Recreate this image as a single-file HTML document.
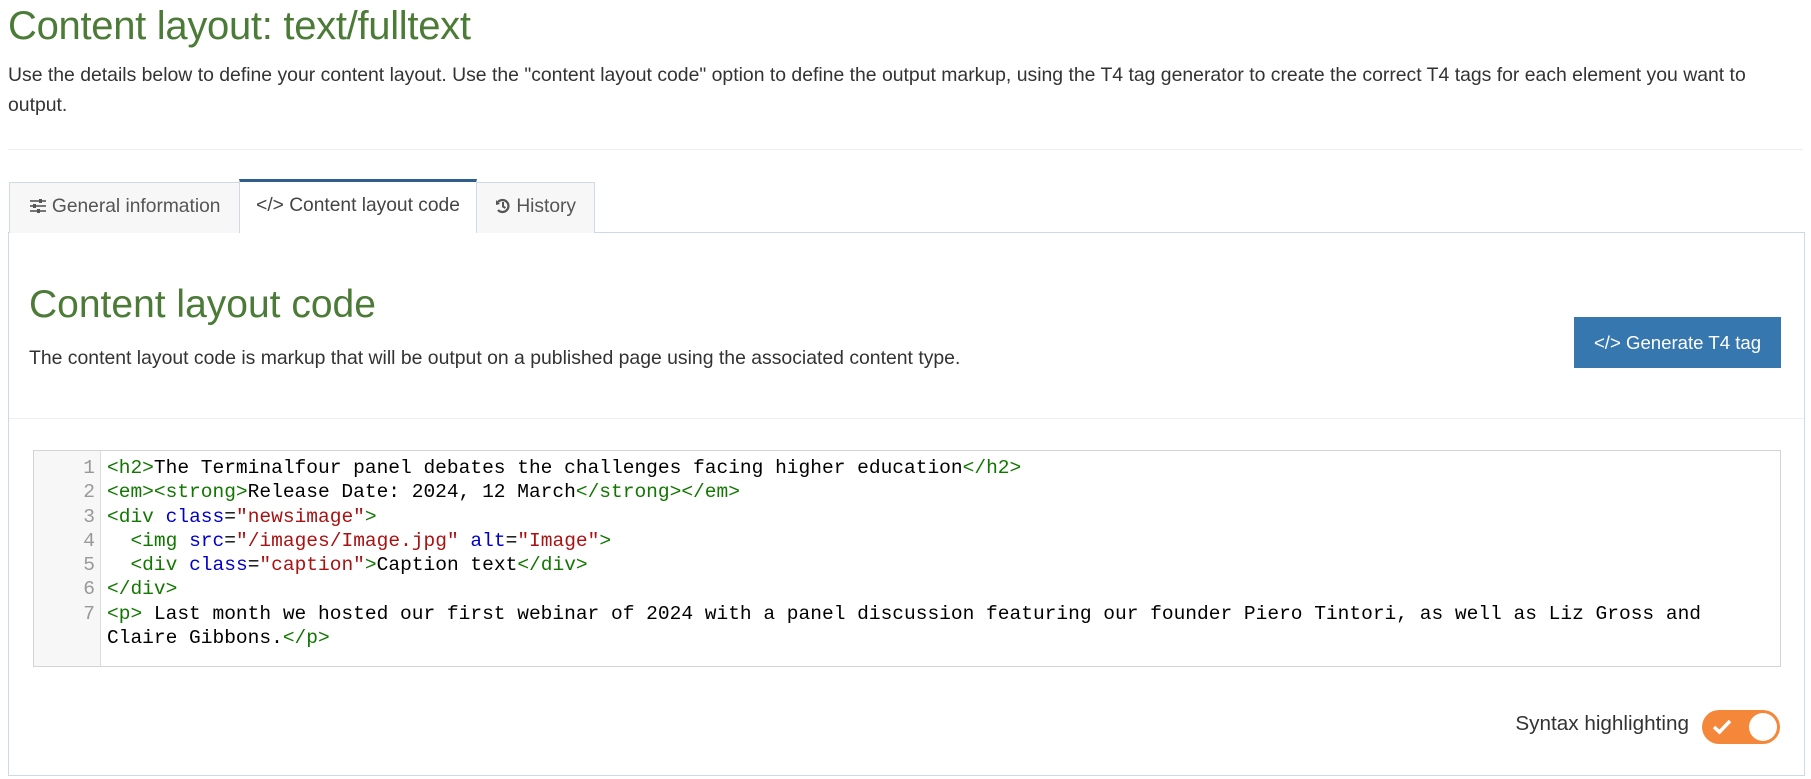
<!DOCTYPE html>
<html><head><meta charset="utf-8"><style>
*{box-sizing:border-box;margin:0;padding:0}
body{width:1811px;height:779px;overflow:hidden;background:#fff;font-family:"Liberation Sans",Arial,sans-serif;color:#333;position:relative}
.a{position:absolute}
h1{position:absolute;left:8px;top:4px;font-size:40px;font-weight:normal;color:#4b7b37;letter-spacing:-0.3px}
.intro{left:8px;top:60px;font-size:19.4px;line-height:30px;width:1780px}
.hr1{left:8px;top:149px;width:1795px;height:1px;background:#eee}
.tab{top:182px;height:51px;border:1px solid #cfd9e6;border-bottom:none;background:#f7f7f7;font-size:19.2px;color:#555;padding-top:13px;text-align:center;white-space:nowrap}
.tab.act{top:179px;background:#fff;border-top:3px solid #2e5d8e;height:54px;z-index:2;color:#444}
.panel{left:8px;top:232px;width:1797px;height:544px;border:1px solid #cfd9e6}
h2{position:absolute;left:29px;top:283px;font-size:39px;font-weight:normal;color:#4b7b37}
.desc{left:29px;top:347px;font-size:19.4px}
.btn{left:1574px;top:317px;width:207px;height:51px;background:#3777af;color:#fff;font-size:18.6px;text-align:center;line-height:51px;white-space:nowrap}
.hr2{left:9px;top:418px;width:1795px;height:1px;background:#eee}
.code{left:33px;top:450px;width:1748px;height:217px;border:1px solid #d4d4d4;background:#fff}
.gut{left:34px;top:451px;width:67px;height:215px;background:#f7f7f7;border-right:1px solid #ddd}
pre{position:absolute;font-family:"Liberation Mono","DejaVu Sans Mono",monospace;font-size:19.55px;line-height:24.3px;top:456px}
.ln{left:34px;width:61px;text-align:right;color:#999}
.src{left:107px;color:#000}
.t{color:#170}.s{color:#a11}.at{color:#00c}
.lbl{left:1400px;top:712px;width:289px;text-align:right;font-size:20.7px;white-space:nowrap}
.tog{left:1702px;top:710px;width:78px;height:34px;border-radius:17px;background:#f5873a}
.knob{position:absolute;right:3px;top:3px;width:28px;height:28px;border-radius:50%;background:#fff}
</style></head><body>
<h1>Content layout: text/fulltext</h1>
<div class="a intro">Use the details below to define your content layout. Use the "content layout code" option to define the output markup, using the T4 tag generator to create the correct T4 tags for each element you want to output.</div>
<div class="a hr1"></div>
<div class="a panel"></div>
<div class="a tab" style="left:9px;width:231px"><svg width="18" height="14" viewBox="0 0 18 14" style="vertical-align:-1px"><g stroke="#555" stroke-width="1.6"><line x1="1" y1="2" x2="17" y2="2"/><line x1="1" y1="7" x2="17" y2="7"/><line x1="1" y1="12" x2="17" y2="12"/></g><g fill="#555"><rect x="10" y="0" width="3" height="4"/><rect x="4" y="5" width="3" height="4"/><rect x="8" y="10" width="3" height="4"/></g></svg> General information</div>
<div class="a tab act" style="left:239px;width:238px">&lt;/&gt; Content layout code</div>
<div class="a tab" style="left:476px;width:119px"><svg width="16" height="16" viewBox="0 0 16 16" style="vertical-align:-2px"><path d="M3 4 A6 6 0 1 1 3 12" fill="none" stroke="#555" stroke-width="2.2"/><path d="M1 2 L5 6 L1 7Z" fill="#555"/><path d="M8 4 V8.5 L10.5 10" fill="none" stroke="#555" stroke-width="2"/></svg> History</div>
<h2>Content layout code</h2>
<div class="a desc">The content layout code is markup that will be output on a published page using the associated content type.</div>
<div class="a btn">&lt;/&gt; Generate T4 tag</div>
<div class="a hr2"></div>
<div class="a code"></div>
<div class="a gut"></div>
<pre class="ln">1
2
3
4
5
6
7</pre>
<pre class="src"><span class="t">&lt;h2&gt;</span>The Terminalfour panel debates the challenges facing higher education<span class="t">&lt;/h2&gt;</span>
<span class="t">&lt;em&gt;&lt;strong&gt;</span>Release Date: 2024, 12 March<span class="t">&lt;/strong&gt;&lt;/em&gt;</span>
<span class="t">&lt;div</span> <span class="at">class</span>=<span class="s">"newsimage"</span><span class="t">&gt;</span>
  <span class="t">&lt;img</span> <span class="at">src</span>=<span class="s">"/images/Image.jpg"</span> <span class="at">alt</span>=<span class="s">"Image"</span><span class="t">&gt;</span>
  <span class="t">&lt;div</span> <span class="at">class</span>=<span class="s">"caption"</span><span class="t">&gt;</span>Caption text<span class="t">&lt;/div&gt;</span>
<span class="t">&lt;/div&gt;</span>
<span class="t">&lt;p&gt;</span> Last month we hosted our first webinar of 2024 with a panel discussion featuring our founder Piero Tintori, as well as Liz Gross and
Claire Gibbons.<span class="t">&lt;/p&gt;</span></pre>
<div class="a lbl">Syntax highlighting</div>
<div class="a tog"><svg class="a" style="left:10px;top:9px" width="20" height="16" viewBox="0 0 20 16"><path d="M2 8 L7.5 13 L18 2" fill="none" stroke="#fff" stroke-width="3.5"/></svg><div class="knob"></div></div>
</body></html>
